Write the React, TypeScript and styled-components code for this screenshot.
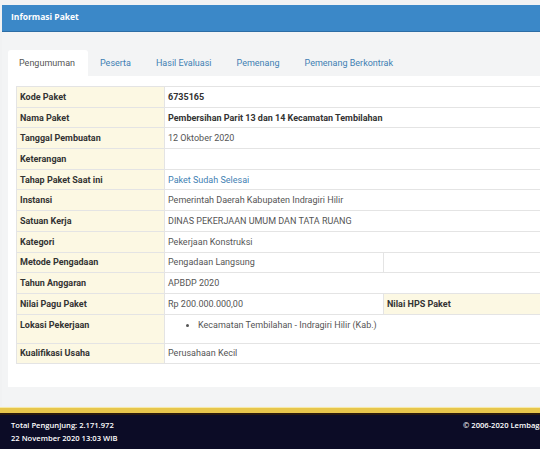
import React from 'react';
import styled, { createGlobalStyle } from 'styled-components';

const GlobalStyle = createGlobalStyle`
  html, body {
    margin: 0;
    padding: 0;
    background: #f1f2f3;
    overflow: hidden;
  }
  body {
    font-family: Roboto, 'Liberation Sans', sans-serif;
  }
`;

type Row = {
  label: string;
  value?: React.ReactNode;
  kind?: 'bold' | 'link' | 'plain';
};

const rows: Row[] = [
  { label: 'Kode Paket', value: '6735165', kind: 'bold' },
  { label: 'Nama Paket', value: 'Pembersihan Parit 13 dan 14 Kecamatan Tembilahan', kind: 'bold' },
  { label: 'Tanggal Pembuatan', value: '12 Oktober 2020' },
  { label: 'Keterangan', value: '' },
  { label: 'Tahap Paket Saat ini', value: 'Paket Sudah Selesai', kind: 'link' },
  { label: 'Instansi', value: 'Pemerintah Daerah Kabupaten Indragiri Hilir' },
  { label: 'Satuan Kerja', value: 'DINAS PEKERJAAN UMUM DAN TATA RUANG' },
  { label: 'Kategori', value: 'Pekerjaan Konstruksi' },
];

const tabs = ['Pengumuman', 'Peserta', 'Hasil Evaluasi', 'Pemenang', 'Pemenang Berkontrak'];

export default function App() {
  return (
    <>
      <GlobalStyle />
      <Page>
        <Panel>
          <PanelHeading>Informasi Paket</PanelHeading>
          <PanelBody>
            <Tabs>
              {tabs.map((t, i) => (
                <Tab key={t} $active={i === 0}>
                  {t}
                </Tab>
              ))}
            </Tabs>
            <TabContent>
              <InfoTable>
                {rows.map((r) => (
                  <React.Fragment key={r.label}>
                    <Label>{r.label}</Label>
                    <Value $span={3} $kind={r.kind}>
                      {r.value}
                    </Value>
                  </React.Fragment>
                ))}
                <Label>Metode Pengadaan</Label>
                <Value>Pengadaan Langsung</Value>
                <Value $span={2} />
                <Label>Tahun Anggaran</Label>
                <Value $span={3}>APBDP 2020</Value>
                <Label>Nilai Pagu Paket</Label>
                <Value>Rp 200.000.000,00</Value>
                <Label>Nilai HPS Paket</Label>
                <Value />
                <Label $tall>Lokasi Pekerjaan</Label>
                <Value $span={3} $tall>
                  <Locations>
                    <li>Kecamatan Tembilahan - Indragiri Hilir (Kab.)</li>
                  </Locations>
                </Value>
                <Label>Kualifikasi Usaha</Label>
                <Value $span={3}>Perusahaan Kecil</Value>
              </InfoTable>
            </TabContent>
          </PanelBody>
        </Panel>
        <Footer>
          <FooterLeft>
            <div>Total Pengunjung: 2.171.972</div>
            <div>22 November 2020 13:03 WIB</div>
          </FooterLeft>
          <FooterRight>© 2006-2020 Lembaga Kebijakan Pengadaan Barang/Jasa Pemerintah</FooterRight>
        </Footer>
      </Page>
    </>
  );
}

const Page = styled.div`
  width: 760px;
  padding-top: 5px;
`;

const Panel = styled.div`
  margin-left: 2px;
`;

const PanelHeading = styled.div`
  height: 26px;
  line-height: 24px;
  padding-left: 9px;
  background: #3b88c8;
  border-bottom: 1px solid #2d6da5;
  color: #ffffff;
  font-family: 'Open Sans', Roboto, sans-serif;
  font-size: 8.5px;
  font-weight: 700;
`;

const PanelBody = styled.div`
  background: #f3f4f5;
  padding: 18px 0 19px 6px;
`;

const Tabs = styled.div`
  display: flex;
  height: 26px;
`;

const Tab = styled.div<{ $active?: boolean }>`
  display: flex;
  align-items: center;
  padding: 0 12.5px 0 ${(p) => (p.$active ? '11px' : '12.5px')};
  font-size: 9px;
  color: ${(p) => (p.$active ? '#555555' : '#3f7fb3')};
  background: ${(p) => (p.$active ? '#ffffff' : 'transparent')};
  border-radius: 3px 3px 0 0;
`;

const TabContent = styled.div`
  background: #ffffff;
  padding: 10px 8px 23px 8px;
`;

const InfoTable = styled.div`
  display: grid;
  grid-template-columns: 148px 219px 157px 200px;
  border-top: 1px solid #e4e4e4;
  border-left: 1px solid #e4e4e4;
`;

const Label = styled.div<{ $tall?: boolean }>`
  display: flex;
  align-items: ${(p) => (p.$tall ? 'flex-start' : 'center')};
  height: ${(p) => (p.$tall ? '29px' : '20.7px')};
  padding: ${(p) => (p.$tall ? '5px 3px 0' : '0 3px')};
  box-sizing: border-box;
  background: #fcf8e3;
  border-right: 1px solid #e4e4e4;
  border-bottom: 1px solid #e4e4e4;
  color: #333333;
  font-size: 9px;
  font-weight: 700;
`;

const Value = styled.div<{ $span?: number; $kind?: 'bold' | 'link' | 'plain'; $tall?: boolean }>`
  grid-column: span ${(p) => p.$span ?? 1};
  display: flex;
  align-items: ${(p) => (p.$tall ? 'flex-start' : 'center')};
  height: ${(p) => (p.$tall ? '29px' : '20.7px')};
  padding: ${(p) => (p.$tall ? '5px 3px 0' : '0 3px')};
  box-sizing: border-box;
  background: #ffffff;
  border-right: 1px solid #e4e4e4;
  border-bottom: 1px solid #e4e4e4;
  font-size: 9px;
  font-weight: ${(p) => (p.$kind === 'bold' ? 700 : 400)};
  color: ${(p) => (p.$kind === 'link' ? '#3f7fb3' : p.$kind === 'bold' ? '#333333' : '#555555')};
`;

const Locations = styled.ul`
  margin: 0;
  padding-left: 30px;
  li {
    line-height: 11px;
  }
`;

const Footer = styled.div`
  display: flex;
  margin-top: 2px;
  padding: 6px 0 4px 11px;
  width: 540px;
  box-sizing: border-box;
  background: #0c0c26;
  border-top: 5px solid #e7c64c;
  box-shadow: 0 -1px 0 #f6eaa8, inset 0 2px 0 #2b1a0c;
  border-bottom: 2px solid #3a3a58;
  color: #ffffff;
  font-family: 'Open Sans', Roboto, sans-serif;
  font-size: 7.6px;
  font-weight: 600;
  line-height: 13px;
  white-space: nowrap;
  overflow: hidden;
`;

const FooterLeft = styled.div`
  display: flex;
  flex-direction: column;
  flex: 0 0 452px;
`;

const FooterRight = styled.div`
  flex: 0 0 auto;
`;
